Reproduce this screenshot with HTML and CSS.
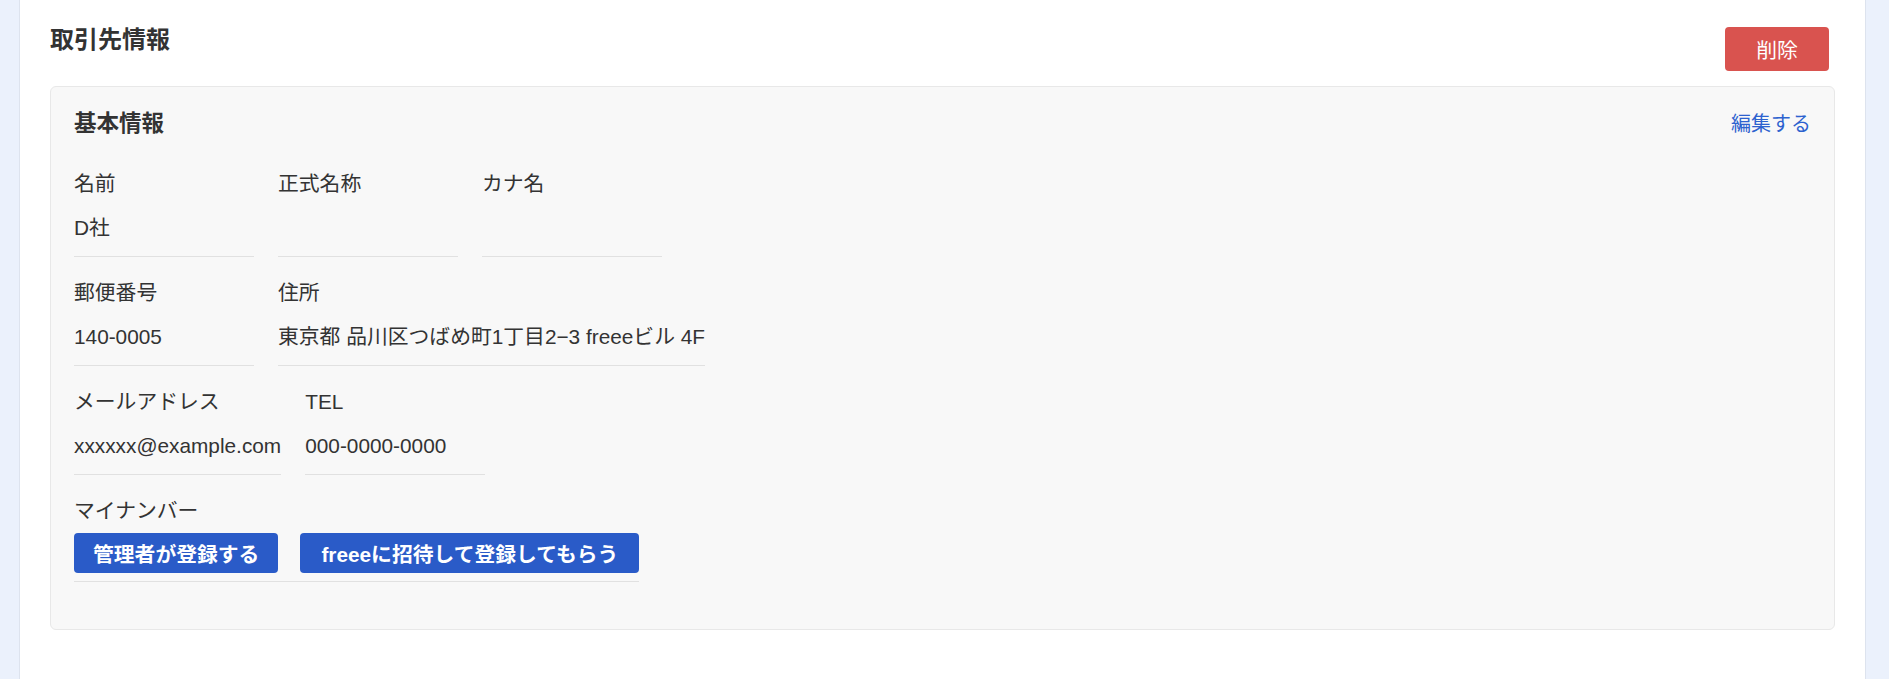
FILE: index.html
```html
<!DOCTYPE html>
<html lang="ja">
<head>
<meta charset="utf-8">
<title>取引先情報</title>
<link rel="stylesheet" href="styles.css">
</head>
<body>
<main class="panel">
  <header class="panel-header">
    <h1 class="page-title">取引先情報</h1>
    <button class="btn-danger" type="button">削除</button>
  </header>
  <section class="card">
    <div class="card-header">
      <h2 class="card-title">基本情報</h2>
      <a class="edit-link" href="#">編集する</a>
    </div>
    <div class="field-row">
      <div class="field"><div class="field-label">名前</div><div class="field-value">D社</div></div>
      <div class="field"><div class="field-label">正式名称</div><div class="field-value"></div></div>
      <div class="field"><div class="field-label">カナ名</div><div class="field-value"></div></div>
    </div>
    <div class="field-row">
      <div class="field"><div class="field-label">郵便番号</div><div class="field-value">140-0005</div></div>
      <div class="field"><div class="field-label">住所</div><div class="field-value">東京都 品川区つばめ町1丁目2−3 freeeビル 4F</div></div>
    </div>
    <div class="field-row">
      <div class="field"><div class="field-label">メールアドレス</div><div class="field-value">xxxxxx@example.com</div></div>
      <div class="field"><div class="field-label">TEL</div><div class="field-value">000-0000-0000</div></div>
    </div>
    <div class="field-row">
      <div class="field field-actions">
        <div class="field-label field-label-tight">マイナンバー</div>
        <div class="action-buttons">
          <button class="btn-primary" type="button">管理者が登録する</button>
          <button class="btn-primary btn-wide" type="button">freeeに招待して登録してもらう</button>
        </div>
      </div>
    </div>
  </section>
</main>
</body>
</html>
```

FILE: styles.css
```css
* { box-sizing: border-box; }

html, body {
  margin: 0;
  height: 100%;
}

body {
  background: #ebf1fc;
  padding: 0 23px 0 19px;
  font-family: "Liberation Sans", "Noto Sans CJK JP", sans-serif;
  font-size: 20.8px;
  line-height: 1.5;
  color: #333333;
}

.panel {
  background: #ffffff;
  border-left: 1px solid #dde3ee;
  border-right: 1px solid #dde3ee;
  min-height: 100vh;
  padding: 24px 30px 30px;
}

.panel-header {
  display: flex;
  justify-content: space-between;
  align-items: flex-start;
  margin-bottom: 15px;
}

.page-title {
  margin: 0;
  font-size: 24px;
  line-height: 32px;
  font-weight: bold;
  color: #333333;
}

.btn-danger {
  margin-top: 3px;
  margin-right: 6px;
  width: 104px;
  height: 44px;
  border: none;
  border-radius: 4px;
  background: #d9534f;
  color: #ffffff;
  font-family: inherit;
  font-size: 20.8px;
  padding: 0;
}

.card {
  background: #f8f8f8;
  border: 1px solid #e8e8e8;
  border-radius: 6px;
  padding: 23px 23px 27px;
  min-height: 544px;
}

.card-header {
  display: flex;
  justify-content: space-between;
  align-items: center;
  height: 28px;
  margin-bottom: 30px;
}

.card-title {
  margin: 0;
  font-size: 22.5px;
  line-height: 28px;
  font-weight: bold;
  color: #333333;
}

.edit-link {
  color: #2d62cf;
  text-decoration: none;
  font-size: 20px;
  line-height: 28px;
}

.field-row {
  display: flex;
  gap: 24px;
  margin-bottom: 20px;
}

.field {
  min-width: 180px;
  border-bottom: 1px solid #e1e1e1;
  padding-bottom: 12px;
}

.field-label {
  line-height: 32px;
  margin-bottom: 12px;
  white-space: nowrap;
}

.field-label-tight {
  margin-bottom: 6px;
}

.field-value {
  line-height: 32px;
  height: 32px;
  white-space: nowrap;
}

.field-actions {
  padding-bottom: 8px;
}

.action-buttons {
  display: flex;
  gap: 22px;
}

.btn-primary {
  height: 40px;
  padding: 0 19px;
  border: none;
  border-radius: 4px;
  background: #2a5bc8;
  color: #ffffff;
  font-family: inherit;
  font-size: 20.8px;
  font-weight: bold;
  white-space: nowrap;
}

.btn-wide {
  padding: 0 21px;
}
```
